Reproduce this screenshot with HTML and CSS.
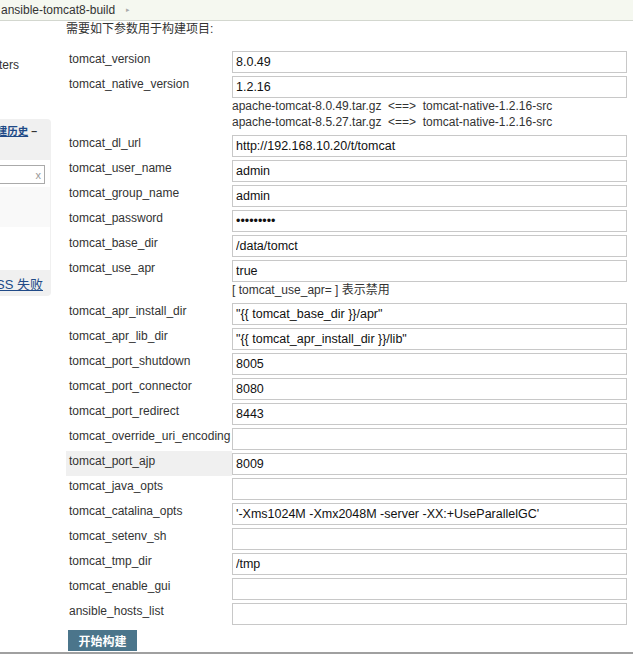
FILE: index.html
```html
<!DOCTYPE html>
<html>
<head>
<meta charset="utf-8">
<link rel="stylesheet" href="styles.css">
</head>
<body>
<div class="topbar"><span class="crumb">ansible-tomcat8-build</span><span class="arrow">&#9656;</span></div>
<div class="layout">
  <div class="sidebar">
    <div class="sidetask"><span>Parameters</span></div>
    <div class="sidebox">
      <div class="sidehead"><span><a href="#">构建历史</a> –</span></div>
      <div class="sidesearch"><div class="searchbox"><span class="clear">x</span></div></div>
      <div class="siderow light"></div>
      <div class="siderow white"></div>
      <div class="sidefoot"><span><a href="#">RSS 全部</a> <a href="#">RSS 失败</a></span></div>
    </div>
  </div>
  <div class="main">
    <div class="heading">需要如下参数用于构建项目:</div>
    <div class="form">
      <div class="label">tomcat_version</div>
      <div class="value"><input class="field" value="8.0.49"></div>

      <div class="label">tomcat_native_version</div>
      <div class="value"><input class="field" value="1.2.16">
        <div class="desc">apache-tomcat-8.0.49.tar.gz&nbsp; &lt;==&gt;&nbsp; tomcat-native-1.2.16-src<br>apache-tomcat-8.5.27.tar.gz&nbsp; &lt;==&gt;&nbsp; tomcat-native-1.2.16-src</div>
      </div>

      <div class="label">tomcat_dl_url</div>
      <div class="value"><input class="field" value="http://192.168.10.20/t/tomcat"></div>

      <div class="label">tomcat_user_name</div>
      <div class="value"><input class="field" value="admin"></div>

      <div class="label">tomcat_group_name</div>
      <div class="value"><input class="field" value="admin"></div>

      <div class="label">tomcat_password</div>
      <div class="value"><input class="field" type="password" value="123456789"></div>

      <div class="label">tomcat_base_dir</div>
      <div class="value"><input class="field" value="/data/tomct"></div>

      <div class="label">tomcat_use_apr</div>
      <div class="value"><input class="field" value="true">
        <div class="desc">[ tomcat_use_apr= ] 表示禁用</div>
      </div>

      <div class="label">tomcat_apr_install_dir</div>
      <div class="value"><input class="field" value="&quot;{{ tomcat_base_dir }}/apr&quot;"></div>

      <div class="label">tomcat_apr_lib_dir</div>
      <div class="value"><input class="field" value="&quot;{{ tomcat_apr_install_dir }}/lib&quot;"></div>

      <div class="label">tomcat_port_shutdown</div>
      <div class="value"><input class="field" value="8005"></div>

      <div class="label">tomcat_port_connector</div>
      <div class="value"><input class="field" value="8080"></div>

      <div class="label">tomcat_port_redirect</div>
      <div class="value"><input class="field" value="8443"></div>

      <div class="label">tomcat_override_uri_encoding</div>
      <div class="value"><input class="field" value=""></div>

      <div class="label hl">tomcat_port_ajp</div>
      <div class="value"><input class="field" value="8009"></div>

      <div class="label">tomcat_java_opts</div>
      <div class="value"><input class="field" value=""></div>

      <div class="label">tomcat_catalina_opts</div>
      <div class="value"><input class="field" value="'-Xms1024M -Xmx2048M -server -XX:+UseParallelGC'"></div>

      <div class="label">tomcat_setenv_sh</div>
      <div class="value"><input class="field" value=""></div>

      <div class="label">tomcat_tmp_dir</div>
      <div class="value"><input class="field" value="/tmp"></div>

      <div class="label">tomcat_enable_gui</div>
      <div class="value"><input class="field" value=""></div>

      <div class="label">ansible_hosts_list</div>
      <div class="value"><input class="field" value=""></div>
    </div>
    <button class="build">开始构建</button>
  </div>
</div>
<div class="footer"></div>
</body>
</html>
```
FILE: styles.css
```css
html, body {
  margin: 0;
  padding: 0;
  background: #fff;
}
body {
  font-family: "Liberation Sans", Arial, "Noto Sans CJK SC", sans-serif;
  font-size: 12px;
  color: #333;
  width: 633px;
  overflow: hidden;
}
a {
  color: #204a87;
}
.topbar {
  height: 20px;
  line-height: 20px;
  background: #f5f8f0;
  border-bottom: 1px solid #d3d7cf;
  display: flex;
  align-items: center;
  white-space: nowrap;
}
.crumb {
  margin-left: 1px;
  font-size: 12px;
  color: #333;
}
.arrow {
  margin-left: 11px;
  font-size: 7px;
  color: #aaa;
}
.layout {
  display: flex;
  gap: 15px;
}
.sidebar {
  width: 51px;
  flex: none;
  padding-top: 36px;
}
.sidetask {
  display: flex;
  justify-content: flex-end;
  white-space: nowrap;
  overflow: hidden;
  line-height: 16px;
  padding-right: 32px;
}
.sidebox {
  margin-top: 46px;
  background: #f0f0f0;
  border-radius: 0 4px 4px 0;
  overflow: hidden;
}
.sidehead {
  height: 41px;
  display: flex;
  justify-content: flex-end;
  white-space: nowrap;
  overflow: hidden;
  padding-right: 14px;
  box-sizing: border-box;
  padding-top: 4px;
  line-height: 16px;
  font-size: 10.5px;
  font-weight: 600;
}
.sidehead a {
  color: #204a87;
}
.sidesearch {
  height: 27px;
  background: #fff;
  padding-top: 5px;
  box-sizing: border-box;
  width: 50px;
}
.searchbox {
  width: 45px;
  height: 19px;
  box-sizing: border-box;
  border: 1px solid #aaa;
  border-left: none;
  display: flex;
  justify-content: flex-end;
  align-items: center;
}
.clear {
  font-size: 11px;
  color: #999;
  margin-right: 3px;
}
.siderow {
  width: 50px;
}
.siderow.light {
  height: 40px;
  background: #f9f9f9;
}
.siderow.white {
  height: 43px;
  background: #fff;
}
.sidefoot {
  height: 26px;
  display: flex;
  justify-content: flex-end;
  align-items: center;
  white-space: nowrap;
  overflow: hidden;
  padding-right: 8px;
  font-size: 13px;
}
.sidefoot a {
  color: #204a87;
  margin-left: 4px;
}
.main {
  flex: none;
  width: 567px;
}
.heading {
  line-height: 16px;
  margin-bottom: 14px;
}
.form {
  display: grid;
  grid-template-columns: 166px 395px;
  row-gap: 3px;
}
.label {
  line-height: 16px;
  padding-left: 3px;
  white-space: nowrap;
}
.label.hl {
  background: #f0f0f0;
  margin: -2px 0 -1px;
  padding-top: 2px;
}
.value {
  display: flex;
  flex-direction: column;
}
.field {
  width: 395px;
  height: 22px;
  box-sizing: border-box;
  border: 1px solid #c8c8c8;
  padding: 0 3px;
  margin: 0;
  font-family: "Liberation Sans", Arial, "Noto Sans CJK SC", sans-serif;
  font-size: 12.5px;
  color: #111;
  background: #fff;
  outline: none;
}
.desc {
  line-height: 16px;
  margin-bottom: 2px;
  color: #333;
  white-space: nowrap;
}
.build {
  margin: 5px 0 0 2px;
  width: 69px;
  height: 21px;
  background: #4b758b;
  border: 1px solid #4b758b;
  color: #fff;
  font-family: "Liberation Sans", Arial, "Noto Sans CJK SC", sans-serif;
  font-size: 12px;
  font-weight: bold;
  padding: 0;
  display: block;
}
.footer {
  margin-top: 1px;
  border-top: 2px solid #a0a0a0;
  height: 10px;
}
```
